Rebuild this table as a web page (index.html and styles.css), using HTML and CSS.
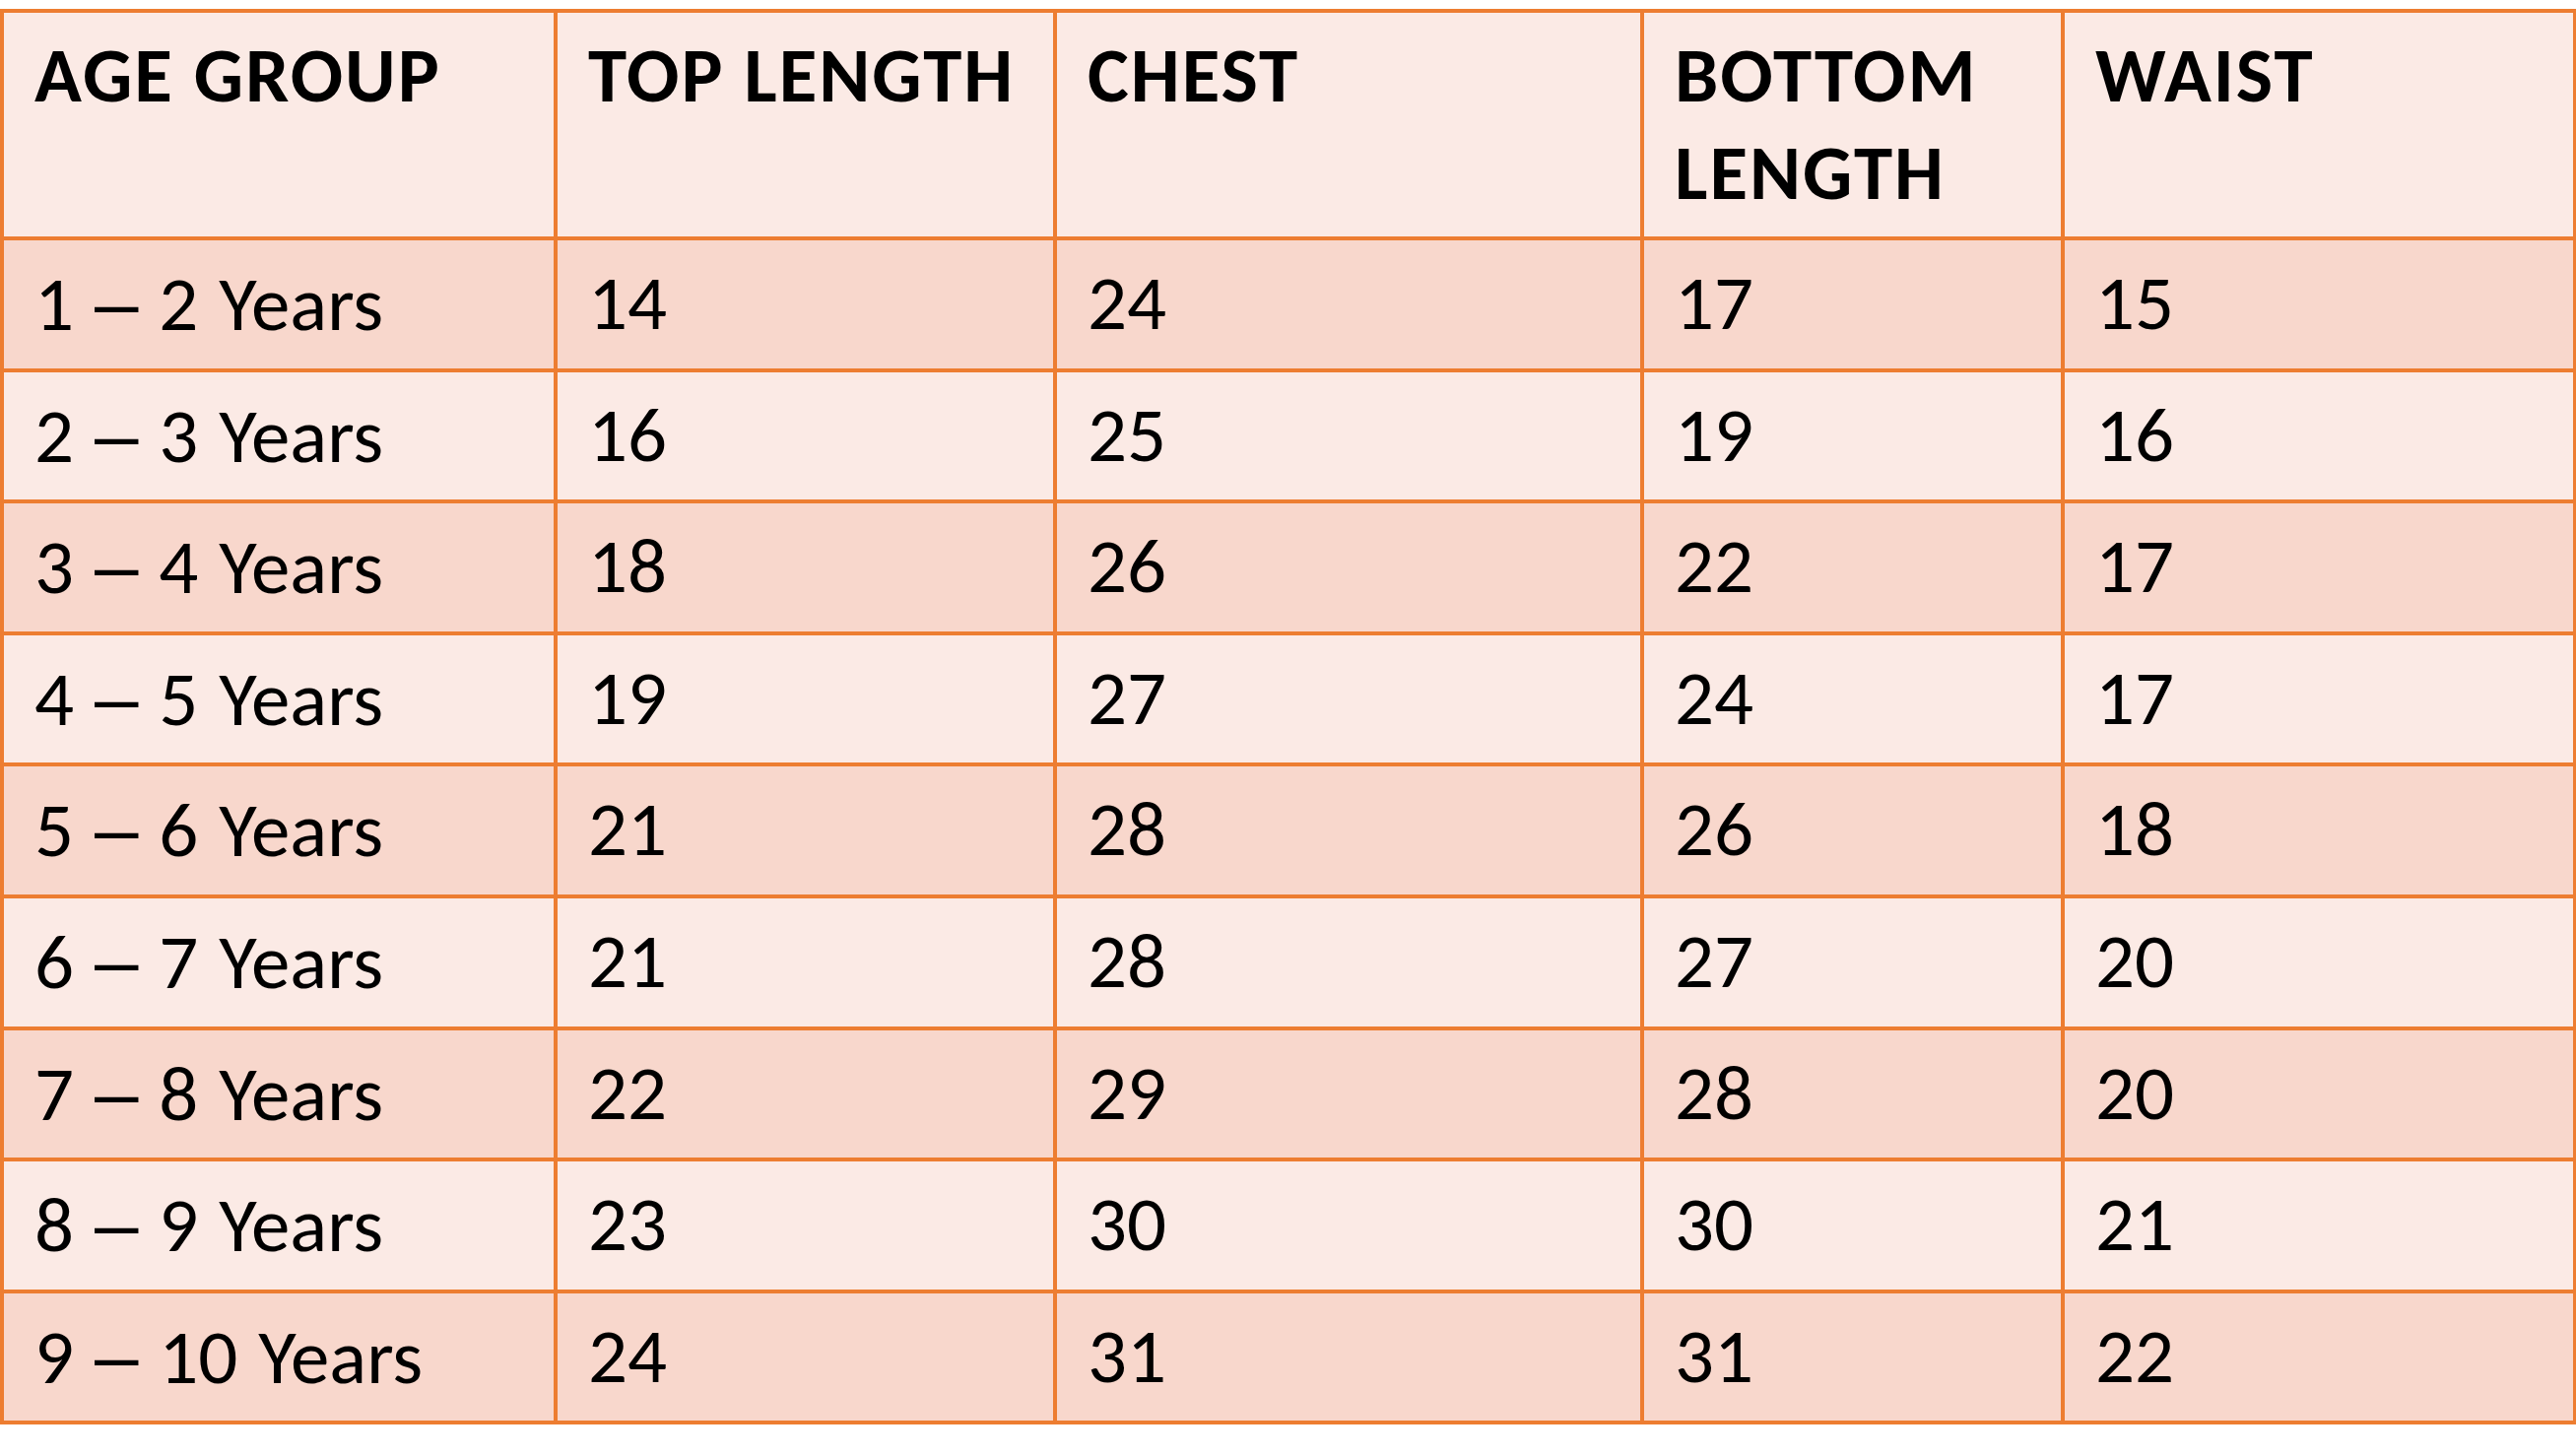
FILE: index.html
```html
<!DOCTYPE html>
<html lang="en">
<head>
<meta charset="utf-8">
<title>Size Chart</title>
<link rel="stylesheet" href="styles.css">
</head>
<body>
<table class="size-table">
  <colgroup>
    <col class="c-age">
    <col class="c-top">
    <col class="c-chest">
    <col class="c-bottom">
    <col class="c-waist">
  </colgroup>
  <thead>
    <tr class="head-row">
      <th>AGE GROUP</th>
      <th>TOP LENGTH</th>
      <th>CHEST</th>
      <th>BOTTOM LENGTH</th>
      <th>WAIST</th>
    </tr>
  </thead>
  <tbody>
    <tr class="band-dark"><td class="age">1 <span class="dash">–</span> 2 Years</td><td>14</td><td>24</td><td>17</td><td>15</td></tr>
    <tr class="band-light"><td class="age">2 <span class="dash">–</span> 3 Years</td><td>16</td><td>25</td><td>19</td><td>16</td></tr>
    <tr class="band-dark"><td class="age">3 <span class="dash">–</span> 4 Years</td><td>18</td><td>26</td><td>22</td><td>17</td></tr>
    <tr class="band-light"><td class="age">4 <span class="dash">–</span> 5 Years</td><td>19</td><td>27</td><td>24</td><td>17</td></tr>
    <tr class="band-dark"><td class="age">5 <span class="dash">–</span> 6 Years</td><td>21</td><td>28</td><td>26</td><td>18</td></tr>
    <tr class="band-light"><td class="age">6 <span class="dash">–</span> 7 Years</td><td>21</td><td>28</td><td>27</td><td>20</td></tr>
    <tr class="band-dark"><td class="age">7 <span class="dash">–</span> 8 Years</td><td>22</td><td>29</td><td>28</td><td>20</td></tr>
    <tr class="band-light"><td class="age">8 <span class="dash">–</span> 9 Years</td><td>23</td><td>30</td><td>30</td><td>21</td></tr>
    <tr class="band-dark"><td class="age">9 <span class="dash">–</span> 10 Years</td><td>24</td><td>31</td><td>31</td><td>22</td></tr>
  </tbody>
</table>
</body>
</html>
```

FILE: styles.css
```css
html, body {
  margin: 0;
  padding: 0;
  background: #ffffff;
}

body {
  padding-top: 9px;
  font-family: Carlito, Calibri, Lato, "Liberation Sans", sans-serif;
  color: #000000;
}

.size-table {
  border-collapse: collapse;
  table-layout: fixed;
  width: 2612px;
  border: 4px solid #ed7d31;
}

.c-age { width: 562px; }
.c-top { width: 507px; }
.c-chest { width: 596px; }
.c-bottom { width: 427px; }
.c-waist { width: 520px; }

.size-table th,
.size-table td {
  border: 4px solid #ed7d31;
  padding: 14px 20px 0 31px;
  vertical-align: top;
  text-align: left;
  font-size: 79px;
  line-height: 99px;
}

.size-table th {
  font-weight: 700;
  letter-spacing: 2px;
}

.size-table td {
  font-weight: 400;
}

.size-table td.age {
  word-spacing: 3px;
}

.dash {
  font-family: "Liberation Sans", sans-serif;
  font-size: 80px;
}

.head-row {
  height: 231px;
  background: #fbeae5;
}

.band-dark {
  height: 133.6px;
  background: #f8d7cc;
}

.band-light {
  height: 133.6px;
  background: #fbeae5;
}
```
